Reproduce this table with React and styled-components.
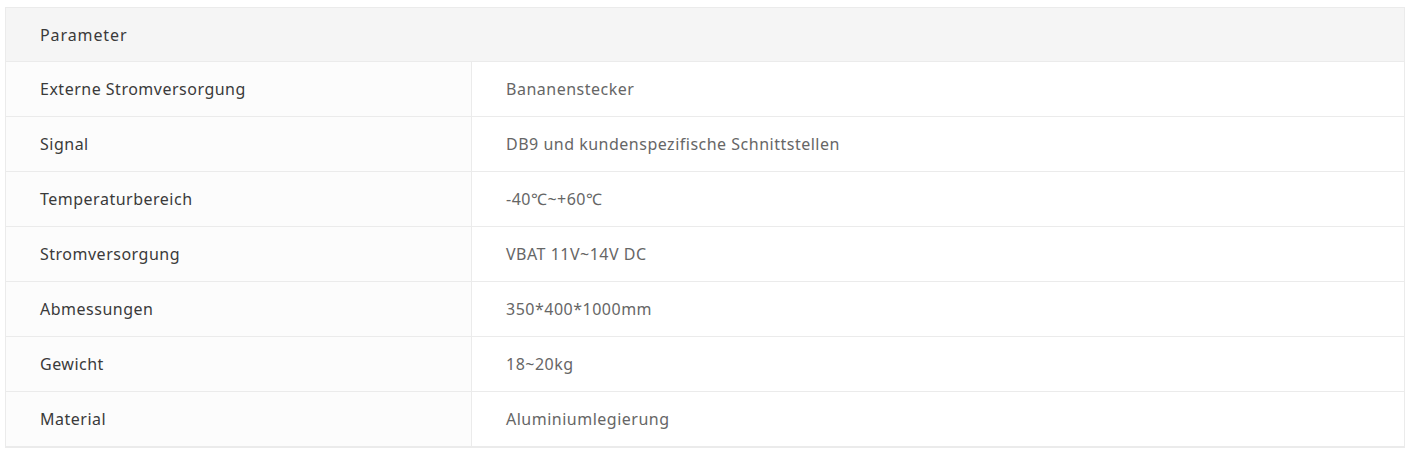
import React from "react";
import styled, { createGlobalStyle } from "styled-components";

const Global = createGlobalStyle`
  html, body { margin: 0; padding: 0; background: #ffffff; }
  body { font-family: "Noto Sans", "Open Sans", sans-serif; }
`;

const Page = styled.div`
  padding: 7px 5px 0 5px;
  width: 1400px;
`;

const Table = styled.div`
  border: 1px solid #ebebeb;
  border-bottom-width: 2px;
`;

const Header = styled.div`
  height: 53px;
  display: flex;
  align-items: center;
  padding-left: 34px;
  background: #f5f5f5;
  border-bottom: 1px solid #ebebeb;
  color: #3a3a3a;
  font-size: 16px;
  letter-spacing: 0.9px;
`;

const Row = styled.div`
  display: grid;
  grid-template-columns: 466px 1fr;
  height: 54px;
  border-bottom: ${(p) => (p.$last ? "none" : "1px solid #ebebeb")};
`;

const Cell = styled.div`
  display: flex;
  align-items: center;
  padding-left: 34px;
  font-size: 16px;
  letter-spacing: 0.5px;
  background: ${(p) => (p.$label ? "#fcfcfc" : "#ffffff")};
  color: ${(p) => (p.$label ? "#3a3a3a" : "#666666")};
  border-right: ${(p) => (p.$label ? "1px solid #ebebeb" : "none")};
`;

const rows = [
  ["Externe Stromversorgung", "Bananenstecker"],
  ["Signal", "DB9 und kundenspezifische Schnittstellen"],
  ["Temperaturbereich", "-40℃~+60℃"],
  ["Stromversorgung", "VBAT 11V~14V DC"],
  ["Abmessungen", "350*400*1000mm"],
  ["Gewicht", "18~20kg"],
  ["Material", "Aluminiumlegierung"],
];

export default function App() {
  return (
    <Page>
      <Global />
      <Table>
        <Header>Parameter</Header>
        {rows.map(([k, v], i) => (
          <Row key={k} $last={i === rows.length - 1}>
            <Cell $label>{k}</Cell>
            <Cell>{v}</Cell>
          </Row>
        ))}
      </Table>
    </Page>
  );
}
